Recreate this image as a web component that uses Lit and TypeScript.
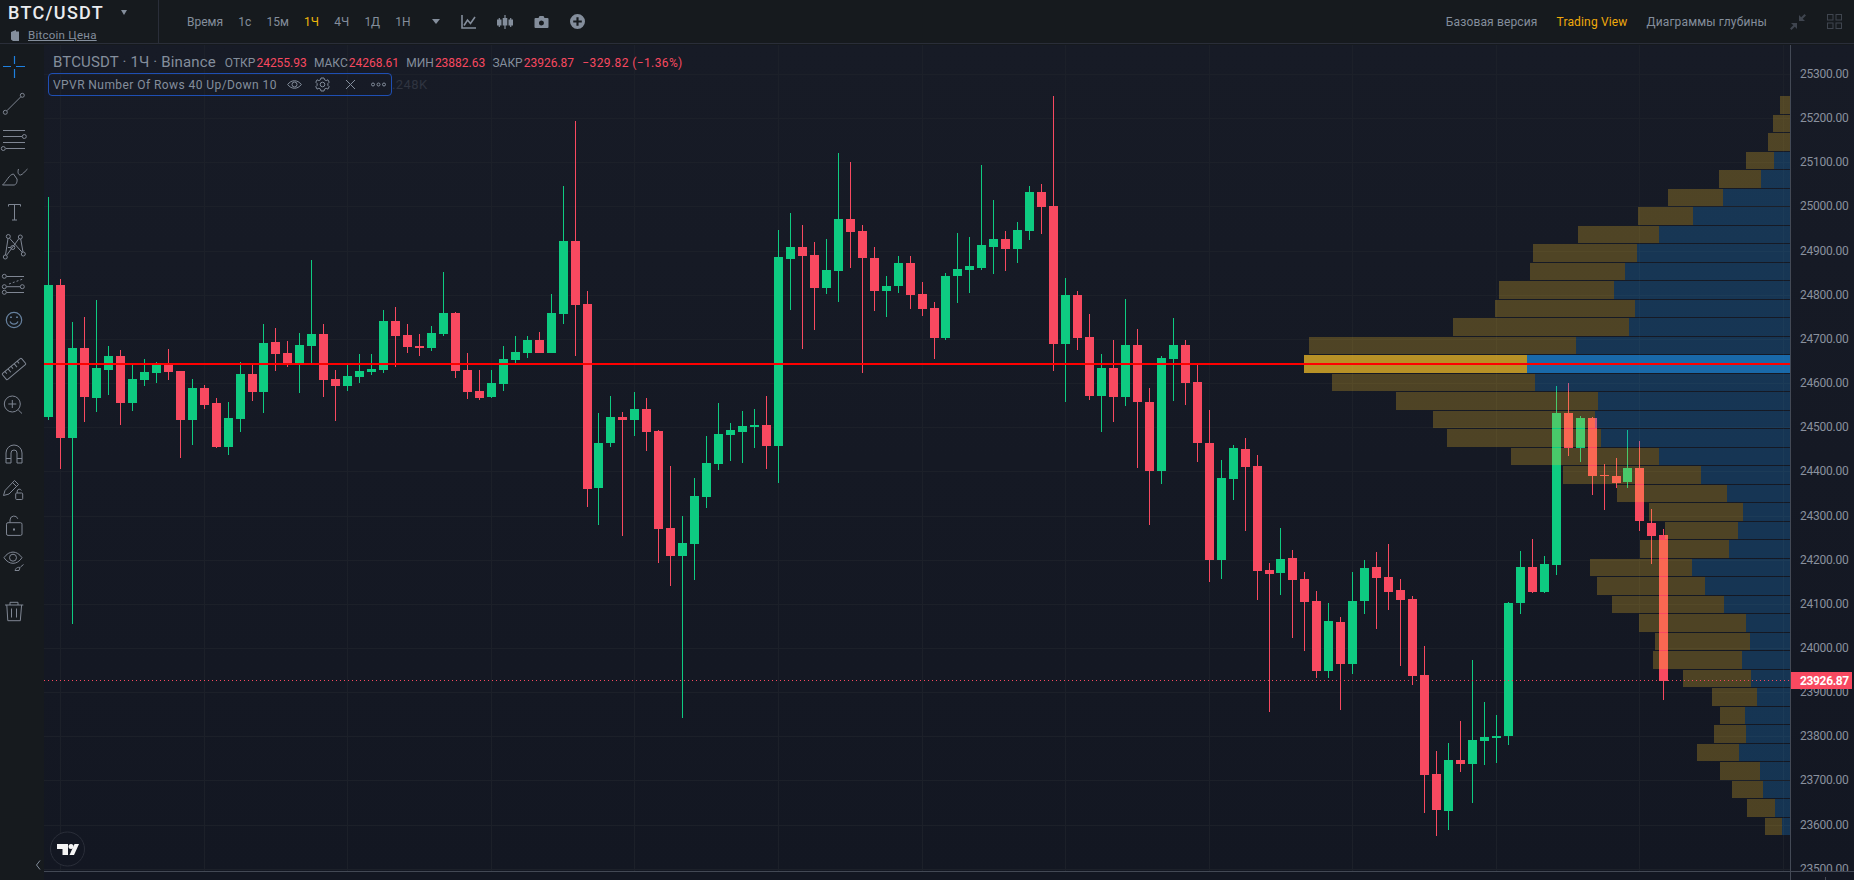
import { LitElement, html, svg, css } from 'lit';
import { customElement } from 'lit/decorators.js';

// hi, bodyTop, bodyBottom, lo, direction (page pixels, the chart has no scale of its own)
type Candle = [number, number, number, number, 'g' | 'r'];

const CANDLES: Candle[] = [
  [197,285,417,420,'g'],[279,285,438,469,'r'],[322,348,438,624,'g'],[317,348,397,422,'r'],[300,368,398,412,'g'],
  [346,356,370,395,'g'],[350,356,403,425,'r'],[365,379,403,411,'g'],[359,372,380,386,'g'],[362,365,373,383,'g'],
  [349,365,372,380,'r'],[371,371,420,458,'r'],[379,388,420,445,'g'],[385,388,405,409,'r'],[398,403,447,448,'r'],
  [402,418,447,455,'g'],[362,374,419,432,'g'],[365,374,392,401,'r'],[324,343,392,413,'g'],[328,342,354,371,'r'],
  [341,353,363,367,'r'],[333,345,363,393,'g'],[260,334,346,363,'g'],[324,334,380,397,'r'],[370,379,386,421,'r'],
  [365,376,386,391,'g'],[354,371,377,383,'g'],[354,369,372,375,'g'],[310,321,370,373,'g'],[307,321,336,367,'r'],
  [324,335,347,353,'r'],[334,346,348,356,'r'],[326,333,348,351,'g'],[272,313,334,336,'g'],[312,313,371,378,'r'],
  [353,370,392,399,'r'],[370,391,398,400,'r'],[370,383,397,398,'g'],[346,359,384,391,'g'],[336,352,360,363,'g'],
  [336,340,353,358,'g'],[332,340,353,353,'r'],[294,313,353,353,'g'],[186,241,314,324,'g'],[121,241,305,356,'r'],
  [291,304,489,507,'r'],[413,443,488,525,'g'],[396,417,443,447,'g'],[412,417,420,536,'r'],[392,409,420,436,'g'],
  [398,409,432,451,'r'],[430,431,529,563,'r'],[466,528,556,586,'r'],[516,543,556,718,'g'],[478,496,544,580,'g'],
  [436,463,497,508,'g'],[403,434,464,470,'g'],[423,430,435,461,'g'],[411,426,432,463,'g'],[409,425,427,448,'g'],
  [396,425,446,469,'r'],[230,257,446,483,'g'],[213,247,259,310,'g'],[225,247,256,349,'r'],[242,255,288,330,'r'],
  [239,270,288,294,'g'],[153,219,271,302,'g'],[162,219,232,268,'r'],[225,231,258,373,'r'],[247,258,291,311,'r'],
  [276,286,291,317,'g'],[256,263,286,293,'g'],[256,263,295,309,'r'],[282,294,309,316,'r'],[302,308,338,359,'r'],
  [273,276,338,340,'g'],[233,269,276,303,'g'],[237,266,270,293,'g'],[165,245,268,270,'g'],[200,239,247,274,'g'],
  [231,239,249,271,'r'],[222,230,249,263,'g'],[186,192,231,240,'g'],[184,192,207,234,'r'],[96,206,344,371,'r'],
  [278,295,344,402,'g'],[291,295,338,350,'r'],[314,337,396,400,'r'],[354,368,396,432,'g'],[340,368,397,422,'r'],
  [299,345,397,406,'g'],[329,345,402,468,'r'],[388,402,471,525,'r'],[356,358,471,484,'g'],[318,345,359,401,'g'],
  [340,345,383,405,'r'],[365,382,443,462,'r'],[410,443,560,582,'r'],[460,478,560,579,'g'],[445,448,479,500,'g'],
  [438,449,467,531,'r'],[455,466,571,600,'r'],[563,570,574,712,'r'],[528,559,573,595,'g'],[550,558,580,638,'r'],
  [572,579,602,651,'r'],[591,601,671,678,'r'],[603,621,671,678,'g'],[617,622,664,710,'r'],[572,601,664,674,'g'],
  [560,568,601,614,'g'],[552,567,578,629,'r'],[544,577,592,610,'r'],[579,590,600,666,'r'],[596,599,676,685,'r'],
  [646,675,775,813,'r'],[751,774,810,836,'r'],[743,760,811,830,'g'],[721,760,764,772,'r'],[660,740,764,803,'g'],
  [702,737,741,765,'g'],[715,736,738,763,'g'],[602,603,736,745,'g'],[551,567,603,614,'g'],[539,567,592,593,'r'],
  [556,564,592,593,'g'],[386,413,565,575,'g'],[383,413,448,456,'r'],[416,418,448,462,'g'],[417,418,476,495,'r'],
  [464,475,476,510,'r'],[458,476,483,488,'r'],[430,468,482,488,'g'],[441,468,521,531,'r'],[509,523,536,564,'r'],
  [529,535,681,700,'r'],
];

// volume profile rows, top to bottom: left edge, start of the blue part
const PROFILE: [number, number][] = [
  [1780,1790],[1773,1790],[1768,1790],[1746,1774],[1719,1761],[1668,1723],[1638,1693],[1578,1659],[1533,1637],[1530,1625],
  [1499,1614],[1495,1635],[1453,1629],[1309,1576],[1304,1527],[1332,1535],[1396,1598],[1433,1595],[1447,1601],[1511,1659],
  [1563,1701],[1617,1727],[1649,1743],[1665,1738],[1640,1729],[1590,1692],[1597,1705],[1612,1724],[1639,1746],[1655,1750],
  [1653,1742],[1683,1751],[1712,1757],[1720,1745],[1714,1746],[1697,1739],[1720,1760],[1732,1763],[1747,1775],[1765,1782],
];

const POC_ROW = 14;
const AXIS_X = 1790;
const candleX = (i: number) => 48 + 12 * i - Math.floor((i + 11) / 28.5);
const priceY = (k: number) => Math.round(74 + 44.15 * k);

const ICONS = [
  { cls: 'blue', body: svg`<path d="M3 13.5h8M16 13.5h9M14.5 3v8M14.5 16v9"/>` },
  { body: svg`<circle cx="5.3" cy="23.3" r="2"/><circle cx="22.3" cy="6.3" r="2"/><path d="M6.8 21.8 20.8 7.8"/>` },
  { body: svg`<path d="M3 5.5h22M3 11.5h19M3 17.5h22M6 23.5h19"/><circle cx="24.3" cy="11.5" r="2"/><circle cx="3.3" cy="23.5" r="2"/>` },
  { body: svg`<path d="M2.5 24H14c2 0 3.5-3 3-6l-3.5-5C9 13.5 7 20 2.5 24z"/><path d="M18.5 8c-1 3-.5 6 2 6 2.500-.5 3.500-3 7-6"/>` },
  { body: svg`<path d="M8.500 9.500v-2h12v2M14.500 7.500V23M12 23h5"/>` },
  { body: svg`<circle cx="8.300" cy="3.500" r="2"/><circle cx="20.300" cy="4" r="2"/><circle cx="12.800" cy="14.500" r="2"/><circle cx="5.300" cy="24" r="2"/><circle cx="23.300" cy="21" r="2"/><path d="M8 5.500 5.500 22M9.500 5.200l12.700 14.200M19 5.500 6.500 22.400M20.700 6l2.300 13M10.800 14.500H8"/>` },
  { body: svg`<circle cx="4.300" cy="7.300" r="2"/><circle cx="4.300" cy="17.700" r="2"/><circle cx="22.300" cy="17.700" r="2"/><circle cx="4.300" cy="23.300" r="2"/><path d="M6.500 7.500H24M6.500 17.700H20M6.500 23.500H24"/><path stroke-dasharray="2 2" d="M9 15l14-5"/>` },
  { cls: 'bluish', body: svg`<circle cx="14" cy="15" r="7.700"/><path d="M10 16.500c1.500 3.500 6.500 3.500 8 0"/><path stroke-width="1.800" d="M11 11.500v1.500M17 11.500v1.500"/>` },
  { body: svg`<g transform="rotate(-40 14 15)"><rect x="1.500" y="11" width="25" height="8" rx="1"/><path d="M5.500 11v3M9.500 11v4.500M13.500 11v3M17.500 11v4.500M21.500 11v3"/></g>` },
  { body: svg`<circle cx="12.300" cy="14" r="8"/><path d="M18.300 20 22 23.500M8.300 14h8M12.300 10v8"/>` },
  { body: svg`<path d="M6 22V12a8 8 0 0 1 16 0v10h-5V12a3 3 0 0 0-6 0v10zM6 17.500h5M17 17.500h5"/>` },
  { body: svg`<path d="M3.500 18.500 5 13.500 14.500 3.500l4 4L9 17zM12.500 5.500l4 4"/><rect x="15.700" y="16" width="7" height="6.500" rx="1"/><path d="M17.200 16v-2a2.200 2.200 0 0 1 4.200-.5"/>` },
  { body: svg`<rect x="6.500" y="9.700" width="15.500" height="12.700" rx="1.500"/><path d="M10 9.700V7a4 4 0 0 1 7.800-1.200"/><path stroke-width="2" d="M14 15.500v2"/>` },
  { body: svg`<path d="M4 8.700c5-7.500 13-7.500 18 0-5 7.500-13 7.500-18 0z"/><circle cx="13" cy="8.700" r="3.500"/><path d="M15 21.500c1-3 3-3.500 5-3l-1 3zM20.500 18l3-2.500"/>` },
  { body: svg`<path d="M5 9h18.300M10 9V6.300h8V9M6.800 9l1 15.700h12.500L21.600 9M11.500 12.500v9M16.500 12.500v9"/>` },
];
// extra room above a tool, to group the column the way the reference does
const TOOL_GAP = ['', '', '', '', '', '', '', '', 'gap-13', '', 'gap-15', '', '', '', 'gap-11'];

const INTERVALS = ['Время', '1с', '15м', '1Ч', '4Ч', '1Д', '1Н'];

@customElement('app-root')
export class AppRoot extends LitElement {
  static styles = css`
    :host {
      display: block;
      width: 1854px;
      height: 880px;
      overflow: hidden;
      background: #161a1e;
      color: #848e9c;
      font-family: Roboto, 'Noto Sans', sans-serif;
      font-size: 12px;
    }
    .top {
      display: flex;
      align-items: stretch;
      height: 43px;
      border-bottom: 1px solid #2a2e39;
    }
    .symbol {
      width: 159px;
      box-sizing: border-box;
      padding: 2px 0 0 8px;
      border-right: 1px solid #2a2e39;
    }
    .pair {
      display: flex;
      align-items: center;
      height: 20px;
      color: #eaecef;
      font-size: 18px;
      font-weight: 500;
      letter-spacing: 1.3px;
    }
    .caret {
      width: 0;
      height: 0;
      margin-left: 17px;
      border: 3.5px solid transparent;
      border-top: 5px solid #848e9c;
      border-bottom: 0;
    }
    .page-link {
      display: flex;
      align-items: center;
      gap: 9px;
      margin: 6px 0 0 3px;
      font-size: 11.5px;
    }
    .page-link span { text-decoration: underline; letter-spacing: .25px; }
    .intervals {
      display: flex;
      align-items: center;
      gap: 15.2px;
      padding-left: 28px;
    }
    .intervals .active { color: #f0b90b; }
    .views .active { color: #f0a90b; }
    .tools-top {
      display: flex;
      align-items: center;
      gap: 21px;
      margin-left: 21px;
    }
    .tools-top svg { display: block; fill: #848e9c; }
    .views {
      display: flex;
      align-items: center;
      gap: 19px;
      margin-left: auto;
      letter-spacing: .15px;
    }
    .views-icons {
      display: flex;
      align-items: center;
      gap: 21px;
      margin: 0 12px 0 23px;
    }
    .views-icons svg { display: block; fill: none; stroke: #3f454f; }
    .body { display: flex; height: 836px; }
    .side {
      width: 44px;
      flex: none;
      display: flex;
      flex-direction: column;
      padding-top: 5px;
      box-sizing: border-box;
      position: relative;
    }
    .tool { height: 36px; display: flex; align-items: center; }
    .tool svg {
      overflow: visible;
      display: block;
      fill: none;
      stroke: #7f8693;
      stroke-width: 1;
    }
    .tool svg.blue { stroke: #1e80e0; stroke-width: 1.2; }
    .tool svg.bluish { stroke: #66809e; stroke-width: 1.2; }
    .gap-13 { margin-top: 13px; }
    .gap-15 { margin-top: 15px; }
    .gap-11 { margin-top: 11px; }
    .chevron {
      position: absolute;
      left: 35px;
      top: 816px;
      fill: none;
      stroke: #848e9c;
    }
    .chart { position: relative; flex: 1; }
    .chart > svg { display: block; }
    .legend {
      position: absolute;
      left: 9px;
      top: 9px;
      white-space: nowrap;
    }
    .ohlc { display: flex; align-items: baseline; height: 18px; font-size: 12px; }
    .title { font-size: 15px; margin-right: 9px; letter-spacing: .15px; }
    .ohlc b { font-weight: 400; color: #f84960; margin: 0 7.2px 0 1px; }
    .ohlc b.change { letter-spacing: .4px; }
    .indicator {
      display: flex;
      align-items: center;
      width: 344px;
      height: 23px;
      box-sizing: border-box;
      margin: 2px 0 0 -5px;
      padding-left: 4px;
      border: 1px solid #1f4fb4;
      border-radius: 4px;
      letter-spacing: .43px;
      position: relative;
    }
    .indicator svg { display: block; fill: none; stroke: #848e9c; }
    .ind-icons { display: flex; align-items: center; gap: 13px; margin-left: 10px; }
    .faded {
      position: absolute;
      left: 343px;
      top: 3px;
      font-size: 13px;
      color: #2f3440;
    }
    .bg-grid line { stroke: #1c2029; stroke-width: 1; shape-rendering: crispEdges; }
    .up { fill: #0ecb81; }
    .down { fill: #f84960; }
    .profile rect { shape-rendering: crispEdges; }
    .buy { fill: rgb(252, 197, 40); }
    .sell { fill: rgb(27, 140, 226); }
    .candles rect { shape-rendering: crispEdges; }
    .level { stroke: #ff0000; stroke-width: 2; shape-rendering: crispEdges; }
    .last { stroke: #f84960; stroke-width: 1; stroke-dasharray: 1 3; shape-rendering: crispEdges; }
    .axis-line { stroke: #434955; stroke-width: 1; shape-rendering: crispEdges; }
    .axis-text { fill: #8a919e; font-size: 12px; font-family: Roboto, sans-serif; letter-spacing: -.25px; }
    .price-tag { fill: #f84960; shape-rendering: crispEdges; }
    .price-text { fill: #fff; font-size: 12px; font-weight: 700; font-family: Roboto, sans-serif; letter-spacing: -.35px; }
    .time-axis { fill: #131722; }
    .logo-ring { fill: #131722; stroke: #2a2e39; }
    .logo { fill: #f5f5f5; }
  `;

  private renderGrid() {
    const vertical = [];
    for (let i = 1; i <= 145; i += 12) vertical.push(candleX(i) + 0.5);
    const horizontal = [];
    for (let k = 0; k < 19; k++) horizontal.push(priceY(k) + 0.5);
    return svg`<g class="bg-grid">
      ${vertical.map(x => svg`<line x1=${x} x2=${x} y1="45" y2="871"></line>`)}
      ${horizontal.map(y => svg`<line x1="44" x2=${AXIS_X} y1=${y} y2=${y}></line>`)}
    </g>`;
  }

  private renderCandles() {
    return svg`<g class="candles">${CANDLES.map(([hi, top, bot, lo, dir], i) => {
      const x = candleX(i);
      const cls = dir === 'g' ? 'up' : 'down';
      return svg`<rect class=${cls} x=${x} y=${hi} width="1" height=${lo - hi}></rect>
        <rect class=${cls} x=${x - 4} y=${top} width="9" height=${bot - top}></rect>`;
    })}</g>`;
  }

  private renderProfile() {
    return svg`<g class="profile">${PROFILE.map(([left, split], row) => {
      const y = Math.round(96 + 18.5 * row);
      const next = Math.round(96 + 18.5 * (row + 1));
      const h = next - y - 1;
      const alpha = row === POC_ROW ? 0.7 : 0.25;
      return svg`<rect class="buy" x=${left} y=${y} width=${split - left} height=${h} fill-opacity=${alpha}></rect>
        <rect class="sell" x=${split} y=${y} width=${AXIS_X - split} height=${h} fill-opacity=${alpha}></rect>`;
    })}</g>`;
  }

  private renderAxis() {
    const labels = [];
    for (let k = 0; k < 19; k++) {
      labels.push(svg`<text class="axis-text" x="1800" y=${priceY(k) + 3.5}>${(25300 - k * 100).toFixed(2)}</text>`);
    }
    return svg`${labels}
      <rect class="price-tag" x=${AXIS_X} y="672" width="62" height="17"></rect>
      <text class="price-text" x="1800" y="685">23926.87</text>`;
  }

  private renderChart() {
    return html`<svg width="1810" height="836" viewBox="44 44 1810 836">
      <defs>
        <linearGradient id="bg" x1="0" y1="0" x2="0" y2="1">
          <stop offset="0" stop-color="#171b26"></stop>
          <stop offset="1" stop-color="#131722"></stop>
        </linearGradient>
      </defs>
      <rect x="44" y="45" width="1810" height="835" fill="url(#bg)"></rect>
      ${this.renderGrid()}
      ${this.renderCandles()}
      ${this.renderProfile()}
      <line class="level" x1="44" x2=${AXIS_X} y1="364" y2="364"></line>
      <line class="last" x1="44" x2=${AXIS_X} y1="680.5" y2="680.5"></line>
      ${this.renderAxis()}
      <rect class="time-axis" x="44" y="871" width="1810" height="9"></rect>
      <line class="axis-line" x1="44" x2="1854" y1="871.5" y2="871.5"></line>
      <line class="axis-line" x1="1790.5" x2="1790.5" y1="45" y2="880"></line>
      <line class="axis-line" x1="1825.5" x2="1825.5" y1="877" y2="880"></line>
      <circle class="logo-ring" cx="67.500" cy="849" r="17"></circle>
      <path class="logo" d="M57 844h11v11h-5.500v-6H57z"></path>
      <circle class="logo" cx="71" cy="846.500" r="2.500"></circle>
      <path class="logo" d="M74.500 844H79l-5 11h-4.500z"></path>
    </svg>`;
  }

  render() {
    return html`
      <div class="top">
        <div class="symbol">
          <div class="pair">BTC/USDT<i class="caret"></i></div>
          <div class="page-link">
            <svg width="8" height="11" viewBox="0 0 8 11" fill="#848e9c"><path d="M0 2l5-2v1.500h3V11H2L0 9.500z"></path></svg>
            <span>Bitcoin Цена</span>
          </div>
        </div>
        <div class="intervals">
          ${INTERVALS.map(t => html`<span class=${t === '1Ч' ? 'active' : ''}>${t}</span>`)}
        </div>
        <div class="tools-top">
          <svg width="8" height="5" viewBox="0 0 8 5"><path d="M0 0h8L4 5z"></path></svg>
          <svg width="15" height="14" viewBox="0 0 15 14" style="fill:none;stroke:#848e9c;stroke-width:1.6">
            <path d="M1 0v13h14M3 10.500 6.500 5 9.500 8.500 14 2"></path>
          </svg>
          <svg width="16" height="14" viewBox="0 0 16 14">
            <path d="M0 4.500h4.500v6H0zM1.700 3h1.200v9H1.700zM5.700 3h4.600v7.500H5.700zM7.400 0h1.200v14H7.400zM11.500 4.500H16v6h-4.500zM13.100 3h1.200v9h-1.200z"></path>
          </svg>
          <svg width="15" height="12" viewBox="0 0 14 12">
            <path fill-rule="evenodd" d="M1 2h3l1-2h4l1 2h3a1 1 0 0 1 1 1v8a1 1 0 0 1-1 1H1a1 1 0 0 1-1-1V3a1 1 0 0 1 1-1zm6 2.500a2.500 2.500 0 1 0 0 5 2.500 2.500 0 0 0 0-5z"></path>
          </svg>
          <svg width="15" height="15" viewBox="0 0 14 14">
            <path fill-rule="evenodd" d="M7 0a7 7 0 1 1 0 14A7 7 0 0 1 7 0zM6 3v3H3v2h3v3h2V8h3V6H8V3z"></path>
          </svg>
        </div>
        <div class="views">
          <span>Базовая версия</span>
          <span class="active">Trading View</span>
          <span>Диаграммы глубины</span>
        </div>
        <div class="views-icons">
          <svg width="16" height="16" viewBox="0 0 16 16" style="fill:#3f454f;stroke:none">
            <path d="M9 1v6h6l-2.300-2.300L16 1.500 14.500 0l-3.300 3.300zM7 15V9H1l2.300 2.300L0 14.500 1.500 16l3.300-3.300z"></path>
          </svg>
          <svg width="15" height="15" viewBox="0 0 15 15">
            <rect x=".5" y=".5" width="5.500" height="5.500"></rect><rect x="9" y=".5" width="5.500" height="5.500"></rect>
            <rect x=".5" y="9" width="5.500" height="5.500"></rect><rect x="9" y="9" width="5.500" height="5.500"></rect>
          </svg>
        </div>
      </div>
      <div class="body">
        <div class="side">
          ${ICONS.map((ic, i) => html`<div class="tool ${TOOL_GAP[i]}">
            <svg class=${ic.cls ?? ''} width="28" height="28" viewBox="0 0 28 28">${ic.body}</svg>
          </div>`)}
          <svg class="chevron" width="6" height="10" viewBox="0 0 6 10"><path d="M5 .5 1.500 5 5 9.500"></path></svg>
        </div>
        <div class="chart">
          ${this.renderChart()}
          <div class="legend">
            <div class="ohlc">
              <span class="title">BTCUSDT · 1Ч · Binance</span>
              <span>ОТКР</span><b>24255.93</b>
              <span>МАКС</span><b>24268.61</b>
              <span>МИН</span><b>23882.63</b>
              <span>ЗАКР</span><b>23926.87</b>
              <b class="change">−329.82 (−1.36%)</b>
            </div>
            <div class="indicator">
              <span>VPVR Number Of Rows 40 Up/Down 10</span>
              <div class="ind-icons">
                <svg width="15" height="15" viewBox="0 0 15 15"><path d="M.7 7.500c3.500-5 10-5 13.600 0-3.600 5-10.100 5-13.600 0z"></path><circle cx="7.500" cy="7.500" r="2.500"></circle></svg>
                <svg width="15" height="15" viewBox="0 0 15 15"><path d="M6 1h3l.5 1.800 1.700.8 1.700-.8 1.300 2.400-1.300 1.300v1.900l1.300 1.300-1.300 2.400-1.700-.8-1.700.8L9 14H6l-.5-1.900-1.700-.8-1.700.8L.8 9.700l1.300-1.300V6.500L.8 5.200l1.300-2.400 1.700.8 1.700-.8z"></path><circle cx="7.500" cy="7.500" r="2.300"></circle></svg>
                <svg width="15" height="15" viewBox="0 0 15 15"><path d="M3 3l9 9M12 3l-9 9"></path></svg>
                <svg width="15" height="15" viewBox="0 0 15 15"><circle cx="2" cy="7.500" r="1.500"></circle><circle cx="7.500" cy="7.500" r="1.500"></circle><circle cx="13" cy="7.500" r="1.500"></circle></svg>
              </div>
              <span class="faded">.248K</span>
            </div>
          </div>
        </div>
      </div>
    `;
  }
}
